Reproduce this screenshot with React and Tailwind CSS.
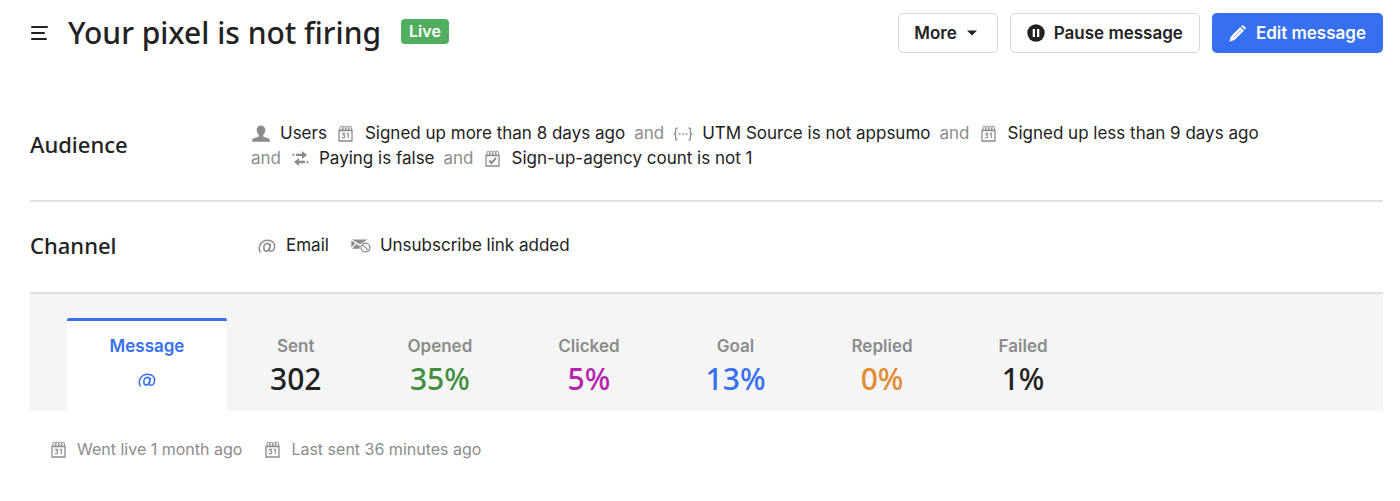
import React from "react";

const UserIcon = () => (
  <svg width="18" height="17" viewBox="0 0 18 17" fill="currentColor">
    <path d="M9 0.5c2.6 0 4.300 1.900 4.300 4.500 0 2-.9 3.900-2.100 4.800v1.100c0 .5.3.8.8 1l3.500 1.200c1.600.6 2.400 1.400 2.400 2.900v.7H.1V16c0-1.500.8-2.300 2.400-2.900L6 11.900c.5-.2.8-.5.8-1V9.800C5.600 8.900 4.700 7 4.700 5 4.700 2.400 6.400.5 9 .5Z" />
  </svg>
);

const CalendarBase = () => (
  <>
    <path
      d="M1 4.500V16h13V4.500M1 5.500h13"
      fill="none"
      stroke="currentColor"
      strokeWidth="1.300"
    />
    <path
      d="M2 5.500V2.400a1.200 1.200 0 0 1 2.400 0V5.500M5 5.500V2.400a1.200 1.200 0 0 1 2.400 0V5.500M8 5.500V2.400a1.200 1.200 0 0 1 2.400 0V5.500M11 5.500V2.400a1.200 1.200 0 0 1 2.400 0V5.500"
      fill="none"
      stroke="currentColor"
      strokeWidth="1"
    />
  </>
);

const CalendarIcon = () => (
  <svg width="15" height="17" viewBox="0 0 15 17">
    <CalendarBase />
    <path
      d="M4 8.300h2.600L5.300 10c2 0 2 2.900-.1 2.900-.6 0-1-.2-1.300-.5M8.800 9.200l1.500-.9v4.700"
      fill="none"
      stroke="currentColor"
      strokeWidth="1.100"
    />
  </svg>
);

const EventIcon = () => (
  <svg width="15" height="17" viewBox="0 0 15 17">
    <CalendarBase />
    <path
      d="M4.200 10.500l2.300 2.500 4.500-5"
      fill="none"
      stroke="currentColor"
      strokeWidth="1.900"
    />
  </svg>
);

const BracesIcon = () => (
  <svg width="20" height="14" viewBox="0 0 20 14" fill="none" stroke="currentColor">
    <path
      d="M4.500 1C2.800 1 2.600 1.800 2.600 3v2c0 1.300-.5 2-1.800 2 1.300 0 1.800.7 1.800 2v2c0 1.200.2 2 1.900 2M15.500 1c1.700 0 1.900.8 1.900 2v2c0 1.300.5 2 1.800 2-1.300 0-1.800.7-1.800 2v2c0 1.200-.2 2-1.900 2"
      strokeWidth="1.300"
    />
    <path d="M5.700 7h1.600M9.200 7h1.600M12.700 7h1.600" strokeWidth="1.500" />
  </svg>
);

const ArrowsIcon = () => (
  <svg width="17" height="17" viewBox="0 0 17 17" fill="currentColor">
    <path d="M4 3.700h6V1l5 4-5 4V6.100H4zM13 10.800H7V8L2 12l5 4v-2.800h6z" />
    <path d="M.5 3.700h2v2h-2zM14.500 11.300h2v2h-2z" />
  </svg>
);

const AtIcon = () => (
  <svg width="18" height="14" viewBox="0 0 18 14" fill="none" stroke="currentColor">
    <path
      d="M2.400 13.500C-.6 8.200 3 1.200 9.600 1.200c4.600 0 7.200 2.600 7 6.100-.2 3-1.900 5-3.800 5-1.300 0-1.700-.9-1.400-2.200l1.200-5.300"
      strokeWidth="1.500"
    />
    <path
      d="M11.800 7.300c.2-1.700-.8-2.900-2.300-2.900-2.200 0-3.700 2-3.700 4.400 0 2 .9 3.300 2.300 3.300 1.700 0 3.100-1.600 3.500-3.900"
      strokeWidth="1.600"
    />
  </svg>
);

const UnsubscribeIcon = () => (
  <svg width="21" height="14" viewBox="0 0 21 14">
    <path d="M1 .2h16.500L9.300 5.200zM.3 1.200l4.500 3L.3 8.500zM5.800 5l3.500 2.100 1-.6C9.300 7.500 8.900 8.600 8.900 9.800H.9z" fill="currentColor" />
    <circle cx="15.200" cy="8.600" r="4.700" fill="#fff" stroke="currentColor" strokeWidth="1.300" />
    <path d="M11.900 5.300l6.600 6.600" stroke="currentColor" strokeWidth="1.300" />
  </svg>
);

const PauseIcon = () => (
  <svg width="18" height="18" viewBox="0 0 18 18">
    <circle cx="9" cy="9" r="8.700" fill="currentColor" />
    <path d="M5.700 5h2.300v8H5.700zM10 5h2.300v8H10z" fill="#fff" />
  </svg>
);

const PencilIcon = () => (
  <svg width="17" height="17" viewBox="0 0 17 17" fill="currentColor">
    <path d="M.3 16.700l1.600-5.200L11.300 2.100l3.600 3.600-9.400 9.400zM12.200 1.200l.7-.7c.5-.5 1-.5 1.500 0l2.100 2.100c.5.5.5 1 0 1.500l-.7.7z" />
    <path d="M4.500 12.500l7.500-7.500" stroke="#366fef" strokeWidth=".6" />
  </svg>
);

function Rule({ icon, children }) {
  return (
    <span className="flex items-center gap-[9px]">
      <span className="flex w-5 justify-center text-[#8c8c8c]">{icon}</span>
      {children}
    </span>
  );
}

const And = () => <span className="text-[#8c8c8c]">and</span>;

const stats = [
  { label: "Sent", value: "302", color: "text-[#222]" },
  { label: "Opened", value: "35%", color: "text-[#42903f]" },
  { label: "Clicked", value: "5%", color: "text-[#b624ae]" },
  { label: "Goal", value: "13%", color: "text-[#366fef]" },
  { label: "Replied", value: "0%", color: "text-[#e08c34]" },
  { label: "Failed", value: "1%", color: "text-[#222]" },
];

export default function App() {
  return (
    <main className="min-h-screen bg-white pl-[30px] pr-[17px] font-['Inter',sans-serif] text-[17px] leading-[25px] text-[#222]">
      <header className="flex items-center justify-between pt-[13px]">
        <div className="flex items-center">
          <button type="button" aria-label="Open menu" className="mr-5">
            <svg width="18" height="16" viewBox="0 0 18 16" fill="none" stroke="currentColor" strokeWidth="2" strokeLinecap="round">
              <path d="M2 2h15M2 8h12M2 14h14" />
            </svg>
          </button>
          <h1 className="font-['Noto_Sans',sans-serif] text-[30px] leading-10 font-medium">
            Your pixel is not firing
          </h1>
          <span className="mb-1 ml-5 rounded bg-[#52ae5f] px-2 text-base leading-[25px] font-semibold text-white">
            Live
          </span>
        </div>
        <div className="flex gap-3 font-semibold">
          <button type="button" className="flex h-10 items-center gap-[10px] rounded-[5px] border border-[#d6d6d6] pr-5 pl-[15px]">
            More
            <svg width="10" height="6" viewBox="0 0 10 6" fill="currentColor">
              <path d="M0 .5h10L5 5.500z" />
            </svg>
          </button>
          <button type="button" className="flex h-10 items-center gap-[9px] rounded-[5px] border border-[#d6d6d6] px-4">
            <PauseIcon />
            Pause message
          </button>
          <button type="button" className="flex h-10 items-center gap-[10px] rounded-[5px] bg-[#366fef] px-[17px] text-white">
            <PencilIcon />
            Edit message
          </button>
        </div>
      </header>

      <section className="mt-[68px] flex items-start border-b-2 border-[#e1e1e1] pb-[29px]">
        <h2 className="mt-[11px] w-[221px] shrink-0 font-['Noto_Sans',sans-serif] text-[22px] leading-[25px] font-medium">
          Audience
        </h2>
        <div className="flex flex-wrap gap-x-[9px]">
          <Rule icon={<UserIcon />}>Users</Rule>
          <Rule icon={<CalendarIcon />}>Signed up more than 8 days ago</Rule>
          <span className="flex gap-[9px]">
            <And />
            <Rule icon={<BracesIcon />}>UTM Source is not appsumo</Rule>
          </span>
          <span className="flex gap-[9px]">
            <And />
            <Rule icon={<CalendarIcon />}>Signed up less than 9 days ago</Rule>
          </span>
          <span className="flex gap-[9px]">
            <And />
            <Rule icon={<ArrowsIcon />}>Paying is false</Rule>
          </span>
          <span className="flex gap-[9px]">
            <And />
            <Rule icon={<EventIcon />}>Sign-up-agency count is not 1</Rule>
          </span>
        </div>
      </section>

      <section className="flex items-center pt-[31px] pb-[34px]">
        <h2 className="w-[227px] shrink-0 font-['Noto_Sans',sans-serif] text-[22px] leading-[25px] font-medium">
          Channel
        </h2>
        <div className="flex gap-[22px]">
          <Rule icon={<AtIcon />}>Email</Rule>
          <Rule icon={<UnsubscribeIcon />}>Unsubscribe link added</Rule>
        </div>
      </section>

      <nav className="flex border-t-2 border-[#dcdcdc] bg-[#f5f5f5] pt-6 pl-[37px] text-center">
        <button type="button" className="flex h-[93px] w-40 flex-col items-center rounded-t-[2px] border-t-[3px] border-[#366fef] bg-white pt-[13px] text-[#366fef]">
          <span className="font-semibold">Message</span>
          <span className="mt-[14px]">
            <AtIcon />
          </span>
        </button>
        {stats.map((stat) => (
          <button key={stat.label} type="button" className="flex h-[93px] flex-col items-center px-[43px] pt-4">
            <span className="font-semibold text-[#8c8c8c]">{stat.label}</span>
            <span className={`font-['Noto_Sans',sans-serif] text-[30px] leading-10 font-medium ${stat.color}`}>
              {stat.value}
            </span>
          </button>
        ))}
      </nav>

      <footer className="mt-[26px] flex gap-5 pl-[18px] text-base leading-[25px] text-[#8c8c8c]">
        <Rule icon={<CalendarIcon />}>Went live 1 month ago</Rule>
        <Rule icon={<CalendarIcon />}>Last sent 36 minutes ago</Rule>
      </footer>
    </main>
  );
}
